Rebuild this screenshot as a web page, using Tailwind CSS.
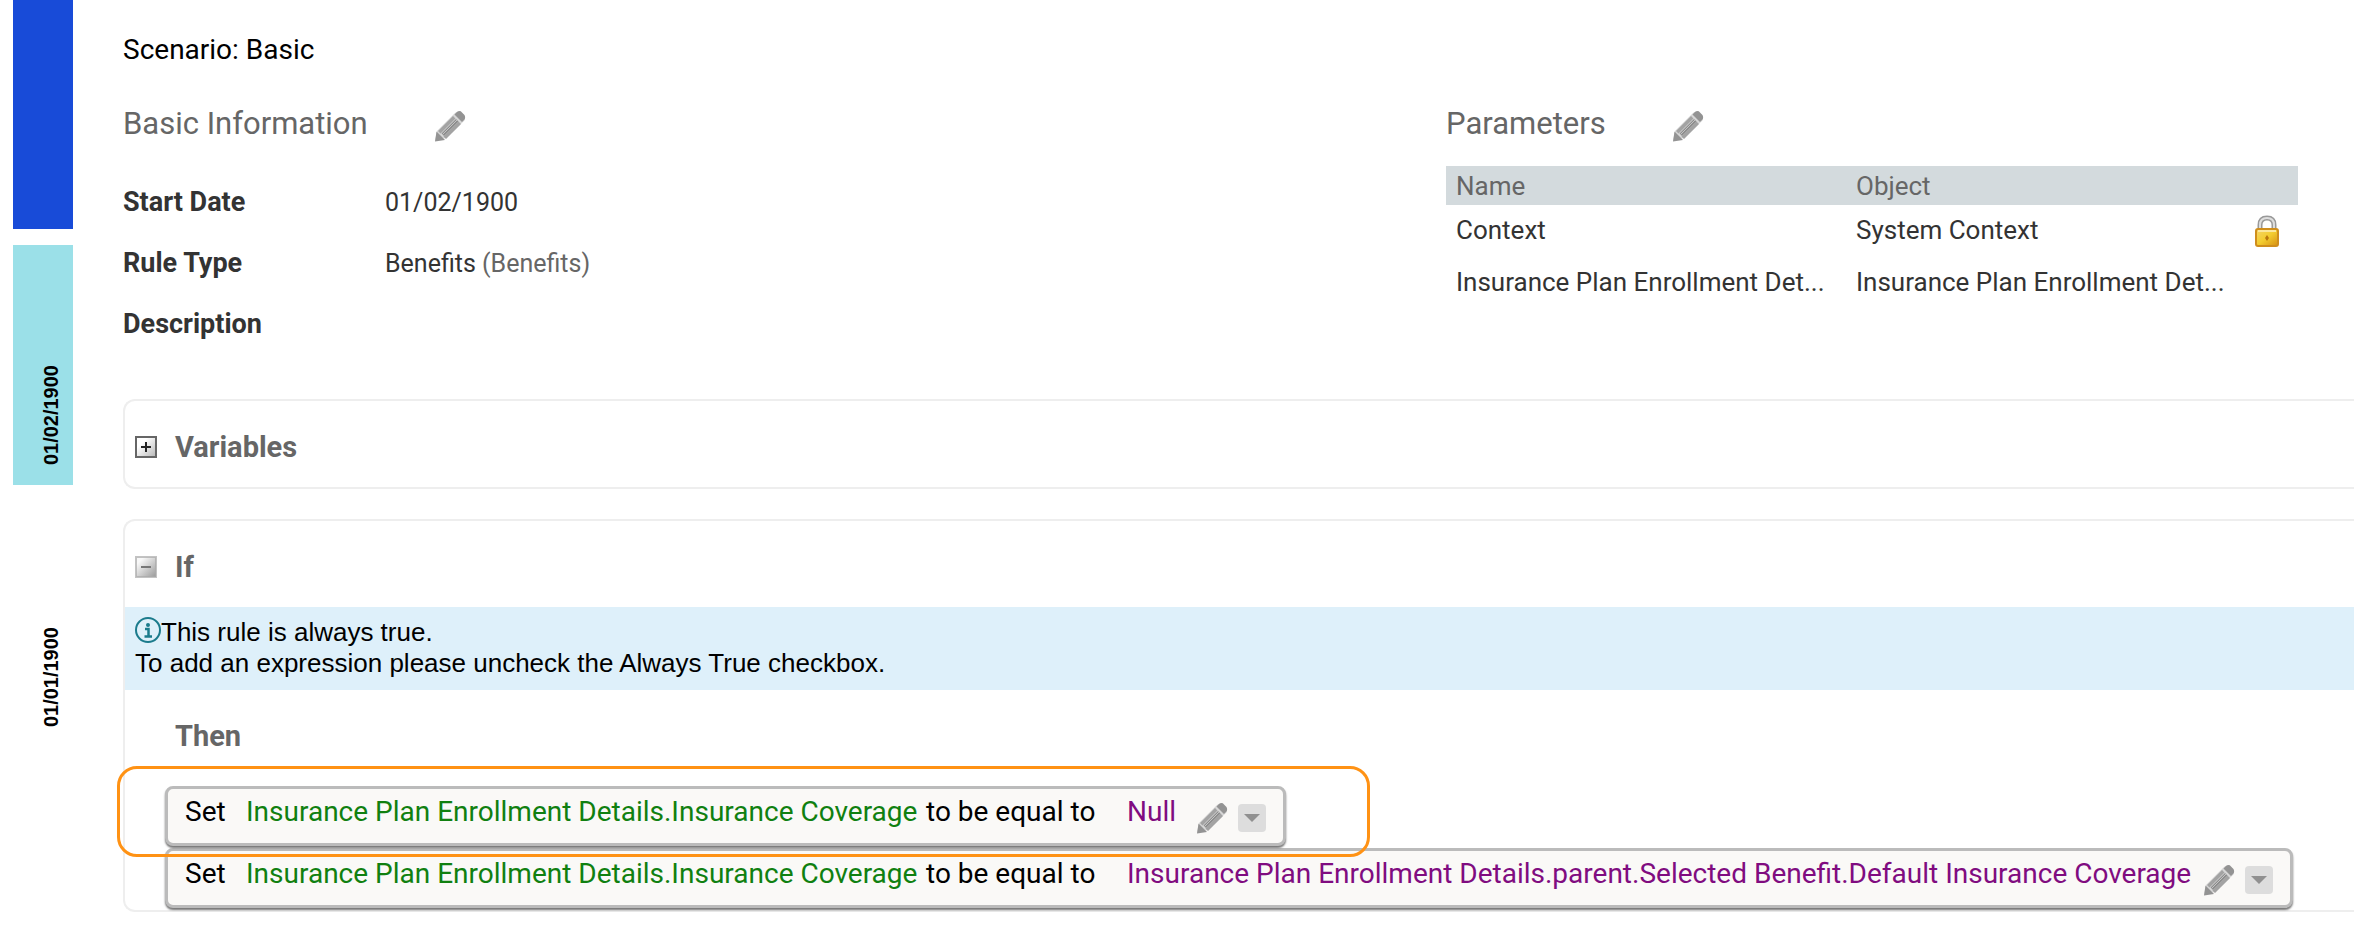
<!DOCTYPE html>
<html lang="en">
<head>
    <meta charset="UTF-8">
    <meta name="viewport" content="width=device-width, initial-scale=1.0">
    <title>Scenario: Basic</title>
    <script src="https://cdn.jsdelivr.net/npm/@tailwindcss/browser@4"></script>
</head>
<body class="flex min-h-screen bg-white pl-[13px] font-['Roboto','Liberation_Sans',sans-serif] text-[26px] text-[#333333]">
    <!-- Shared icons -->
    <svg class="hidden" aria-hidden="true">
        <symbol id="pencil" viewBox="0 0 32 32">
            <path d="M3 21 L21 3 Q24 0 27 3 L30 6 Q32 9 30 11 L12 28 L1 31 Z" fill="#d6d6d6"/>
            <path d="M20.500 4.500 L23 2 Q26 0 28 2.500 L30.500 5 Q32 8 30 10 L28 12 Z" fill="#939393"/>
            <path d="M4 21 L19 6 L21.500 8.500 L6.500 23.500 Z M9.500 26.500 L24.500 11.500 L27 14 L12 29 Z" fill="#a3a3a3"/>
            <path d="M7.500 23.500 L22 9 L24.500 11.500 L10 26 Z" fill="#8e8e8e"/>
            <path d="M8.500 24.500 L23 10" stroke="#c4c4c4" stroke-width="1"/>
            <path d="M2.500 21.500 L11 30 L1 31.500 Z" fill="#939393"/>
        </symbol>
    </svg>

    <!-- Timeline -->
    <nav class="flex w-[60px] shrink-0 flex-col gap-4 text-[20px] leading-6 font-bold text-black font-['Liberation_Sans',sans-serif]" aria-label="Effective dates">
        <div class="h-[229px] bg-[#184bd8]"></div>
        <a href="#" class="flex h-60 items-end justify-center bg-[#9be0e8] pb-5 pl-4"><span class="rotate-180 [writing-mode:vertical-rl]">01/02/1900</span></a>
        <a href="#" class="flex h-[246px] items-end justify-center pb-5 pl-4"><span class="rotate-180 [writing-mode:vertical-rl]">01/01/1900</span></a>
    </nav>

    <main class="ml-[50px] min-w-0 flex-1 pt-8">
        <h1 class="text-[28px] leading-9 text-black">Scenario: Basic</h1>

        <div class="mt-9 grid grid-cols-[1323fr_852fr] pr-14">
            <section>
                <div class="flex h-10 items-center gap-[66px]">
                    <h2 class="text-[31px] leading-10 text-[#666666]">Basic Information</h2>
                    <button type="button" aria-label="Edit basic information" class="pt-1"><svg class="size-8"><use href="#pencil"/></svg></button>
                </div>
                <dl class="mt-7 grid grid-cols-[262px_1fr] leading-[61px]">
                    <dt class="text-[27px] font-bold">Start Date</dt>
                    <dd class="text-[25px]">01/02/1900</dd>
                    <dt class="text-[27px] font-bold">Rule Type</dt>
                    <dd class="text-[25px]">Benefits <span class="text-[#666666]">(Benefits)</span></dd>
                    <dt class="text-[27px] font-bold">Description</dt>
                    <dd class="text-[25px]"></dd>
                </dl>
            </section>
            <section>
                <div class="flex h-10 items-center gap-[66px]">
                    <h2 class="text-[31px] leading-10 text-[#666666]">Parameters</h2>
                    <button type="button" aria-label="Edit parameters" class="pt-1"><svg class="size-8"><use href="#pencil"/></svg></button>
                </div>
                <table class="mt-[22px] w-full table-fixed text-left">
                    <thead>
                        <tr class="h-[39px] bg-[#d3dadd] text-[#666666]">
                            <th class="w-[400px] pl-[10px] leading-9 font-normal">Name</th>
                            <th class="pl-[10px] leading-9 font-normal">Object</th>
                            <th class="w-[52px]"></th>
                        </tr>
                    </thead>
                    <tbody>
                        <tr class="h-[51px]">
                            <td class="pl-[10px]">Context</td>
                            <td class="pl-[10px]">System Context</td>
                            <td class="pl-[9px]">
                                <svg class="h-8 w-6" viewBox="0 0 24 32" role="img" aria-label="Locked">
                                    <defs>
                                        <linearGradient id="brass" x1="0" y1="0" x2="1" y2="1">
                                            <stop offset="0" stop-color="#f5d56a"/>
                                            <stop offset=".5" stop-color="#f3cc2f"/>
                                            <stop offset="1" stop-color="#d68f12"/>
                                        </linearGradient>
                                    </defs>
                                    <path d="M5 15 V10 Q5 3 12 3 Q19 3 19 10 V15" fill="none" stroke="#999" stroke-width="5"/>
                                    <path d="M5 15 V10 Q5 3 12 3 Q19 3 19 10 V15" fill="none" stroke="#dedede" stroke-width="2"/>
                                    <rect x="1" y="14" width="22" height="17" rx="2" fill="url(#brass)" stroke="#cf8e1d" stroke-width="2"/>
                                    <path d="M3 16 H21" stroke="#fbe79c" stroke-width="2"/>
                                    <path d="M12 20 L14 23 L12 26 L10 23 Z" fill="#b9770f"/>
                                </svg>
                            </td>
                        </tr>
                        <tr class="h-[52px]">
                            <td class="truncate pl-[10px]">Insurance Plan Enrollment Det...</td>
                            <td class="truncate pl-[10px]">Insurance Plan Enrollment Det...</td>
                            <td></td>
                        </tr>
                    </tbody>
                </table>
            </section>
        </div>

        <!-- Variables -->
        <section class="mt-11 rounded-l-xl border-2 border-r-0 border-[#eeeeee]">
            <div class="flex h-[86px] items-center gap-[18px] pt-[6px] pl-[10px]">
                <button type="button" aria-label="Expand variables">
                    <svg class="size-[22px]" viewBox="0 0 22 22">
                        <defs>
                            <linearGradient id="face" x1="0" y1="0" x2="1" y2="1">
                                <stop offset=".3" stop-color="#fff"/>
                                <stop offset="1" stop-color="#b5b5b5"/>
                            </linearGradient>
                        </defs>
                        <rect x="1" y="1" width="20" height="20" fill="url(#face)" stroke="#666" stroke-width="2"/>
                        <path d="M6 11 H16 M11 6 V16" stroke="#222" stroke-width="2"/>
                    </svg>
                </button>
                <h3 class="text-[29px] leading-9 font-bold text-[#666666]">Variables</h3>
            </div>
        </section>

        <!-- If / Then -->
        <section class="mt-[30px] rounded-l-xl border-2 border-r-0 border-[#eeeeee]">
            <div class="flex h-[86px] items-center gap-[18px] pt-[6px] pl-[10px]">
                <button type="button" aria-label="Collapse if">
                    <svg class="size-[22px]" viewBox="0 0 22 22">
                        <defs>
                            <linearGradient id="faceDim" x1="0" y1="0" x2="1" y2="1">
                                <stop offset=".2" stop-color="#f8f8f8"/>
                                <stop offset="1" stop-color="#999"/>
                            </linearGradient>
                        </defs>
                        <rect x="1" y="1" width="20" height="20" fill="url(#faceDim)" stroke="#aaa" stroke-opacity=".7" stroke-width="2"/>
                        <path d="M6 11 H16" stroke="#777" stroke-width="2"/>
                    </svg>
                </button>
                <h3 class="text-[29px] leading-9 font-bold text-[#666666]">If</h3>
            </div>

            <div class="bg-[#def0fa] pt-[10px] pb-[11px] pl-[10px] text-[26px] leading-[31px] text-black font-['Liberation_Sans',sans-serif]">
                <p class="flex items-start">
                    <svg class="size-[26px]" viewBox="0 0 26 26" aria-hidden="true">
                        <circle cx="13" cy="13" r="12" fill="none" stroke="#1b7b8c" stroke-width="2"/>
                        <circle cx="13" cy="8" r="2" fill="#1b7b8c"/>
                        <path d="M10 12 H13.500 V19 M9.500 19.500 H17" fill="none" stroke="#1b7b8c" stroke-width="2.500"/>
                    </svg>
                    This rule is always true.
                </p>
                <p>To add an expression please uncheck the Always True checkbox.</p>
            </div>

            <div class="pb-[2px] pl-10">
                <h3 class="pt-[29px] pb-[33px] pl-[10px] text-[29px] leading-[34px] font-bold text-[#666666]">Then</h3>
                <div class="flex flex-col items-start gap-[2px] text-[28px] leading-9 whitespace-nowrap text-black">
                    <div class="relative flex h-[60px] items-start rounded-lg border-3 border-[#bbbbbb] bg-[#faf9f7] pt-[5px] pr-[17px] pl-[17px] shadow-[0_2px_2px_#777777]">
                        <span class="w-[61px]">Set</span>
                        <span class="w-[680px] text-[#108010]">Insurance Plan Enrollment Details.Insurance Coverage</span>
                        <span class="w-[201px]">to be equal to</span>
                        <span class="text-[#800c80]">Null</span>
                        <button type="button" aria-label="Edit statement" class="mt-2 ml-5"><svg class="size-8"><use href="#pencil"/></svg></button>
                        <button type="button" aria-label="Statement menu" class="mt-[10px] ml-[10px] flex size-7 items-center justify-center rounded-sm bg-[#dddddd]"><svg class="h-2 w-4" viewBox="0 0 16 8"><path d="M0 0 H16 L8 8 Z" fill="#909090"/></svg></button>
                        <!-- Callout around the first statement -->
                        <div class="pointer-events-none absolute -top-[23px] -right-[87px] -bottom-[14px] -left-[51px] z-10 rounded-[20px] border-3 border-[#ff9214]"></div>
                    </div>
                    <div class="flex h-[60px] items-start rounded-lg border-3 border-[#bbbbbb] bg-[#faf9f7] pt-[5px] pr-[17px] pl-[17px] shadow-[0_2px_2px_#777777]">
                        <span class="w-[61px]">Set</span>
                        <span class="w-[680px] text-[#108010]">Insurance Plan Enrollment Details.Insurance Coverage</span>
                        <span class="w-[201px]">to be equal to</span>
                        <span class="text-[#800c80]">Insurance Plan Enrollment Details.parent.Selected Benefit.Default Insurance Coverage</span>
                        <button type="button" aria-label="Edit statement" class="mt-2 ml-3"><svg class="size-8"><use href="#pencil"/></svg></button>
                        <button type="button" aria-label="Statement menu" class="mt-[10px] ml-[10px] flex size-7 items-center justify-center rounded-sm bg-[#dddddd]"><svg class="h-2 w-4" viewBox="0 0 16 8"><path d="M0 0 H16 L8 8 Z" fill="#909090"/></svg></button>
                    </div>
                </div>
            </div>
        </section>
    </main>
</body>
</html>
